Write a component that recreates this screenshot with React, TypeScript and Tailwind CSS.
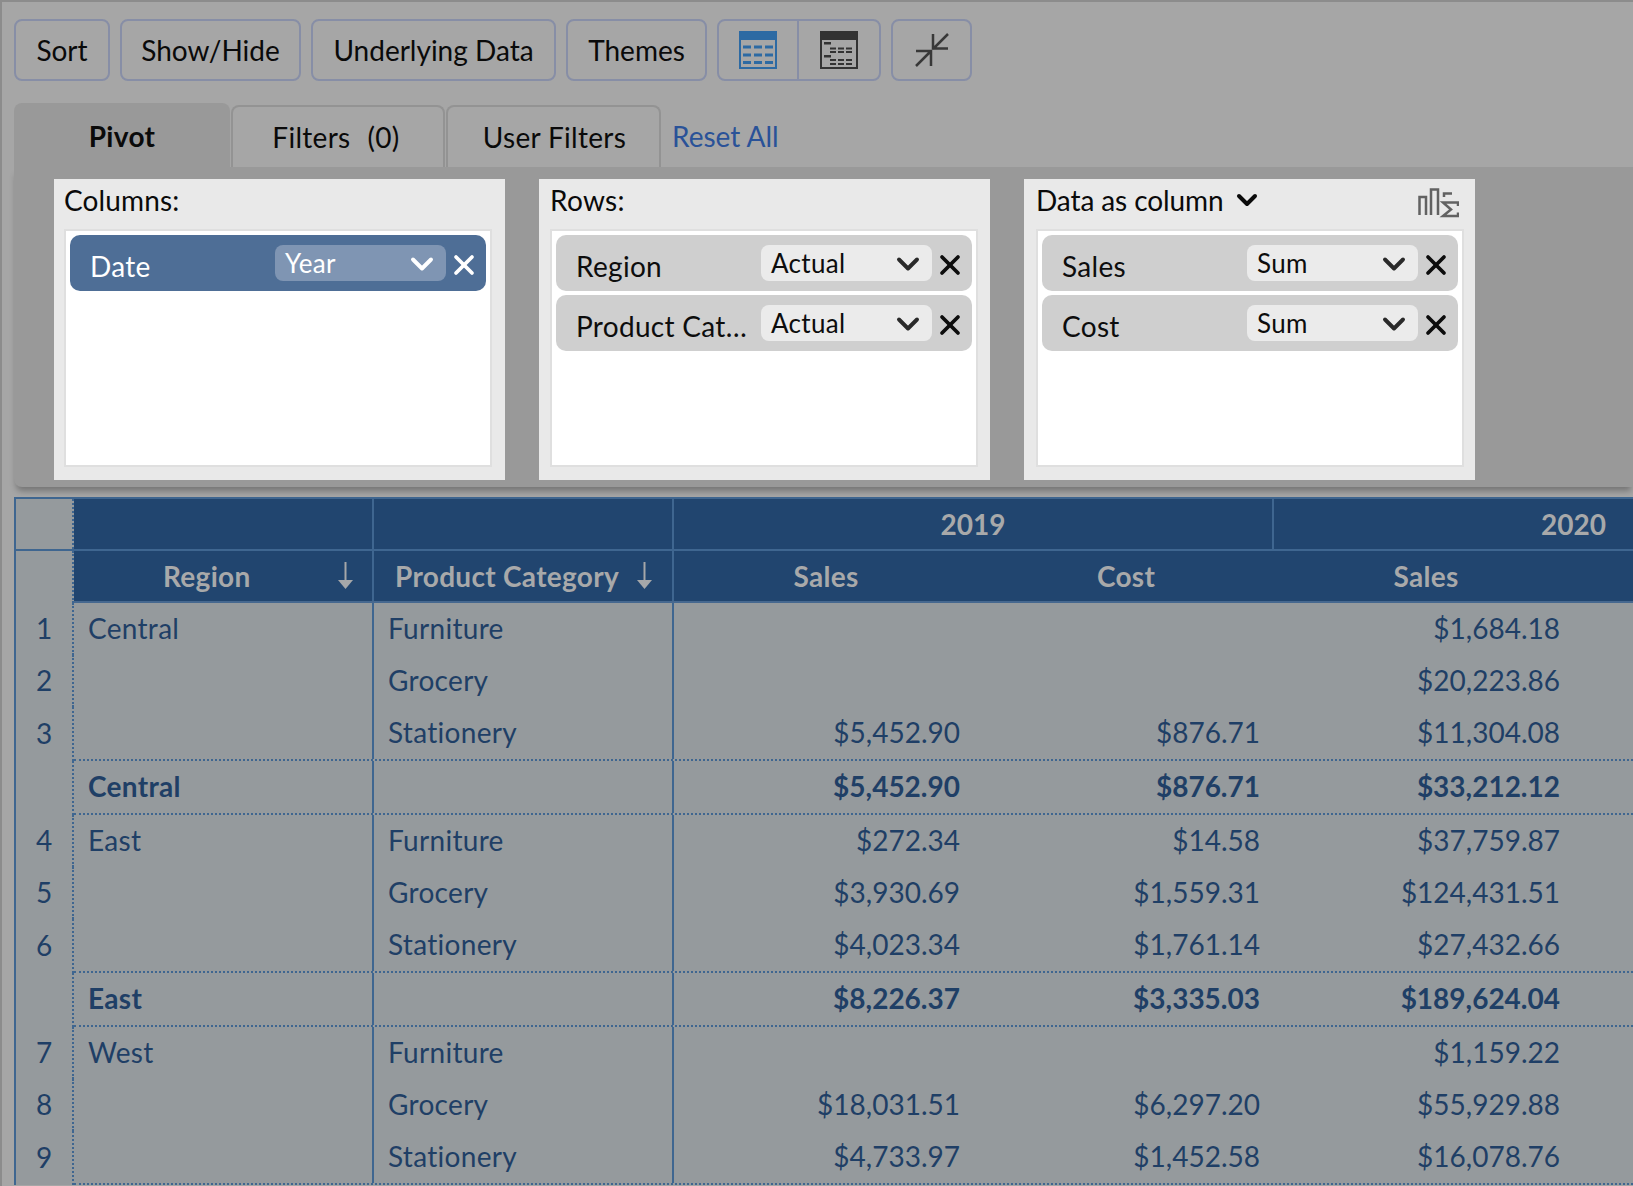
import { ChevronDown, X } from 'lucide-react'

const font = { fontFamily: 'Lato, "Noto Sans", sans-serif' }

type Field = { label: string; value: string }

type Row =
  | { kind: 'data'; num: number; region?: string; category: string; cells: string[]; last?: boolean }
  | { kind: 'total'; region: string; cells: string[] }

const rows: Row[] = [
  { kind: 'data', num: 1, region: 'Central', category: 'Furniture', cells: ['', '', '$1,684.18'] },
  { kind: 'data', num: 2, category: 'Grocery', cells: ['', '', '$20,223.86'] },
  { kind: 'data', num: 3, category: 'Stationery', cells: ['$5,452.90', '$876.71', '$11,304.08'], last: true },
  { kind: 'total', region: 'Central', cells: ['$5,452.90', '$876.71', '$33,212.12'] },
  { kind: 'data', num: 4, region: 'East', category: 'Furniture', cells: ['$272.34', '$14.58', '$37,759.87'] },
  { kind: 'data', num: 5, category: 'Grocery', cells: ['$3,930.69', '$1,559.31', '$124,431.51'] },
  { kind: 'data', num: 6, category: 'Stationery', cells: ['$4,023.34', '$1,761.14', '$27,432.66'], last: true },
  { kind: 'total', region: 'East', cells: ['$8,226.37', '$3,335.03', '$189,624.04'] },
  { kind: 'data', num: 7, region: 'West', category: 'Furniture', cells: ['', '', '$1,159.22'] },
  { kind: 'data', num: 8, category: 'Grocery', cells: ['$18,031.51', '$6,297.20', '$55,929.88'] },
  { kind: 'data', num: 9, category: 'Stationery', cells: ['$4,733.97', '$1,452.58', '$16,078.76'], last: true },
]

const ToolButton = ({ children, className }: { children: string; className: string }) => (
  <button className={'h-[62px] rounded-lg border-2 border-[#878ea6] text-[28px] text-[#0a0a0a] ' + className}>
    {children}
  </button>
)

const GridIcon = ({ dark }: { dark?: boolean }) => {
  const main = dark ? '#333333' : '#2d6aa3'
  if (dark) {
    return (
      <svg width="38" height="38" viewBox="0 0 38 38">
        <rect width="38" height="38" fill={main} />
        <rect x="2" y="9" width="34" height="27" fill="#a6a6a6" />
        <rect x="4" y="11" width="7" height="2.5" fill={main} />
        {[16.5, 20, 28, 32].map((y) =>
          [10, 18, 26].map((x) => <rect key={x + '-' + y} x={x} y={y} width="6" height="2" fill={main} />),
        )}
        <rect x="4" y="24" width="7" height="2.5" fill={main} />
      </svg>
    )
  }
  return (
    <svg width="38" height="38" viewBox="0 0 38 38">
      <rect width="38" height="38" fill={main} />
      <rect x="2" y="9" width="34" height="27" fill="#a6a6a6" />
      {[14.5, 22.5, 30].map((y) =>
        [4, 15, 26].map((x) => <rect key={x + '-' + y} x={x} y={y} width="8" height="3" fill={main} />),
      )}
    </svg>
  )
}

const CollapseIcon = () => (
  <svg width="34" height="34" viewBox="0 0 34 34" fill="none" stroke="#383838" strokeWidth="2.5">
    <path d="M33 1 L18 16 M18 1 V15.5 H33" />
    <path d="M1 33 L16 18 M16 33 V18 H1" />
  </svg>
)

const DataIcon = () => (
  <svg width="41" height="30" viewBox="0 0 41 30" fill="none" stroke="#626262" strokeWidth="2.5">
    <path d="M1.5 27 V9 H8 V27" />
    <path d="M13 27 V1.5 H20 V27" />
    <path d="M26 9 V5.5 H34" />
    <path d="M40 18 V14.5 H25 L33 21.5 L25 28 H40 V24.5" />
  </svg>
)

const FieldChip = ({ label, value, active }: Field & { active?: boolean }) => (
  <div
    className={
      active
        ? 'flex h-14 items-start rounded-[10px] bg-[#4e6e96] pl-5 pr-[6px] text-white'
        : 'flex h-14 items-start rounded-[10px] bg-[#cfcfcf] pl-5 pr-[6px] text-[#0d0d0d]'
    }
  >
    <span className="min-w-0 flex-1 whitespace-nowrap pt-[14px] text-[28px] leading-[35px] tracking-[0.3px]">{label}</span>
    <div
      className={
        active
          ? 'mt-[10px] flex h-9 w-[171px] items-center justify-between rounded-lg bg-[#7f95b3] pl-[10px] pr-[6px] text-white'
          : 'mt-[10px] flex h-9 w-[171px] items-center justify-between rounded-lg bg-[#ebebeb] pl-[10px] pr-[6px] text-[#0d0d0d]'
      }
    >
      <span className="text-[26px] leading-9 tracking-[0.3px]">{value}</span>
      <ChevronDown size={36} strokeWidth={2.6} className={active ? 'mt-[2px] text-white' : 'mt-[2px] text-[#2a2a2a]'} />
    </div>
    <X size={32} strokeWidth={2.8} className="ml-[2px] mt-[14px]" />
  </div>
)

const FieldCard = ({
  header,
  fields,
  active,
  className,
}: {
  header: React.ReactNode
  fields: Field[]
  active?: boolean
  className: string
}) => (
  <div className={'h-[301px] w-[451px] bg-[#e9e9e9] ' + className}>
    <div className="flex h-[50px] items-center pb-2 text-[28px] text-[#0a0a0a]">{header}</div>
    <div className="flex h-[238px] flex-col gap-1 border-2 border-[#dfdfdf] bg-white p-1">
      {fields.map((f) => (
        <FieldChip key={f.label} {...f} active={active} />
      ))}
    </div>
  </div>
)

const SortArrow = () => (
  <svg width="17" height="28" viewBox="0 0 17 28" fill="#a5a7a9" stroke="#a5a7a9">
    <path d="M8.5 0 V20" strokeWidth="2" />
    <path d="M1 18 H16 L8.5 27 Z" strokeWidth="0" />
  </svg>
)

const HeadCell = ({ children, className }: { children?: React.ReactNode; className: string }) => (
  <div className={'flex h-full items-center justify-center ' + className}>{children}</div>
)

const NumCell = ({ n }: { n?: number }) => (
  <div className="flex h-full w-[58px] items-center justify-center border-r-2 border-dotted border-[#3f6690] pb-[2px] text-[#1f3f66]">
    {n}
  </div>
)

const TableRow = ({ row }: { row: Row }) => {
  const total = row.kind === 'total'
  const dotted = total || (row.kind === 'data' && row.last)
  return (
    <div className={dotted ? 'flex h-[54px]' : 'flex h-[52px]'}>
      <NumCell n={row.kind === 'data' ? row.num : undefined} />
      <div
        className={
          (dotted ? 'border-b-2 border-dotted border-[#3f6690] ' : '') +
          (total ? 'font-bold ' : '') +
          'flex flex-1 text-[#1f3f66]'
        }
      >
        <div className="flex w-[300px] items-center border-r-2 border-[#3f6690] pb-[2px] pl-[14px] tracking-[0.3px]">
          {row.region}
        </div>
        <div className="flex w-[300px] items-center border-r-2 border-[#3f6690] pb-[2px] pl-[14px] tracking-[0.3px] [font-variant-ligatures:none]">
          {row.kind === 'data' ? row.category : ''}
        </div>
        {row.cells.map((c, i) => (
          <div key={i} className="flex w-[300px] items-center justify-end pb-[2px] pr-[14px]">
            {c}
          </div>
        ))}
      </div>
    </div>
  )
}

export default function App() {
  return (
    <div className="h-[1186px] w-full overflow-hidden border-l-2 border-t-2 border-[#8c8c8c] bg-[#a6a6a6]" style={font}>
      <div className="flex gap-[10px] pl-3 pt-[17px]">
        <ToolButton className="w-[96px]">Sort</ToolButton>
        <ToolButton className="w-[181px]">Show/Hide</ToolButton>
        <ToolButton className="w-[245px]">Underlying Data</ToolButton>
        <ToolButton className="w-[141px]">Themes</ToolButton>
        <div className="flex h-[62px] w-[164px] rounded-lg border-2 border-[#878ea6]">
          <div className="flex w-[80px] items-center justify-center border-r-2 border-[#878ea6]">
            <GridIcon />
          </div>
          <div className="flex flex-1 items-center justify-center">
            <GridIcon dark />
          </div>
        </div>
        <div className="flex h-[62px] w-[81px] items-center justify-center rounded-lg border-2 border-[#878ea6]">
          <CollapseIcon />
        </div>
      </div>

      <div className="mt-[22px] flex h-[64px] items-end pl-3 text-[28px] text-[#0a0a0a]">
        <div className="flex h-[64px] w-[216px] items-center justify-center rounded-t-lg bg-[#999999] pt-[2px] font-bold tracking-[0.3px]">
          Pivot
        </div>
        <div className="ml-[1px] flex h-[62px] w-[214px] items-center justify-center rounded-t-lg border-2 border-b-0 border-[#939393] pr-1 tracking-[0.3px]">
          <span>Filters</span>
          <span className="ml-[17px]">(0)</span>
        </div>
        <div className="ml-[1px] flex h-[62px] w-[215px] items-center justify-center rounded-t-lg border-2 border-b-0 border-[#939393] pl-[2px] tracking-[0.3px]">
          User Filters
        </div>
        <a className="ml-[11px] flex h-[62px] items-center text-[#2a5298]">Reset All</a>
      </div>

      <div className="ml-3 flex h-[320px] gap-[34px] rounded-bl-lg bg-[#999999] pl-10 pt-3 shadow-[0_6px_6px_-2px_rgba(0,0,0,0.3)]">
        <FieldCard
          className="pl-[10px] pr-[13px]"
          header={<span className="tracking-[0.15px]">Columns:</span>}
          fields={[{ label: 'Date', value: 'Year' }]}
          active
        />
        <FieldCard
          className="pl-[11px] pr-[12px]"
          header={<span className="tracking-[0.3px]">Rows:</span>}
          fields={[
            { label: 'Region', value: 'Actual' },
            { label: 'Product Cat…', value: 'Actual' },
          ]}
        />
        <FieldCard
          className="pl-[12px] pr-[11px]"
          header={
            <div className="flex w-full items-center">
              <span className="tracking-[-0.1px]">Data as column</span>
              <ChevronDown size={32} strokeWidth={3} className="ml-2" />
              <span className="ml-auto mr-[5px] mt-[6px]">
                <DataIcon />
              </span>
            </div>
          }
          fields={[
            { label: 'Sales', value: 'Sum' },
            { label: 'Cost', value: 'Sum' },
          ]}
        />
      </div>

      <div className="ml-3 mt-[10px] border-l-2 border-t-2 border-[#3f6690] bg-[#959a9d] text-[28px]">
        <div className="flex h-[52px] border-b-2 border-[#3f6690] font-bold text-[#a8a9aa]">
          <div className="h-full w-[58px] border-r-2 border-dotted border-[#3f6690]" />
          <div className="flex flex-1 bg-[#21456f]">
            <HeadCell className="w-[300px] border-r-2 border-[#3f6690]" />
            <HeadCell className="w-[300px] border-r-2 border-[#3f6690]" />
            <HeadCell className="w-[600px] border-r-2 border-[#3f6690]">2019</HeadCell>
            <div className="flex flex-1 items-center justify-end pr-[27px]">2020</div>
          </div>
        </div>
        <div className="flex h-[52px] font-bold tracking-[0.3px] text-[#a8a9aa]">
          <div className="h-full w-[58px] border-r-2 border-dotted border-[#3f6690]" />
          <div className="flex flex-1 border-b-2 border-[#46688f] bg-[#21456f]">
            <div className="flex w-[300px] items-center border-r-2 border-[#3f6690] pl-[89px]">
              <span>Region</span>
              <span className="ml-auto mr-[18px]">
                <SortArrow />
              </span>
            </div>
            <div className="flex w-[300px] items-center border-r-2 border-[#3f6690] pl-[21px]">
              <span>Product Category</span>
              <span className="ml-auto mr-[19px]">
                <SortArrow />
              </span>
            </div>
            <HeadCell className="w-[300px] pl-1">Sales</HeadCell>
            <HeadCell className="w-[300px] pl-1">Cost</HeadCell>
            <HeadCell className="w-[300px] pl-1">Sales</HeadCell>
          </div>
        </div>
        {rows.map((row, i) => (
          <TableRow key={i} row={row} />
        ))}
      </div>
    </div>
  )
}
